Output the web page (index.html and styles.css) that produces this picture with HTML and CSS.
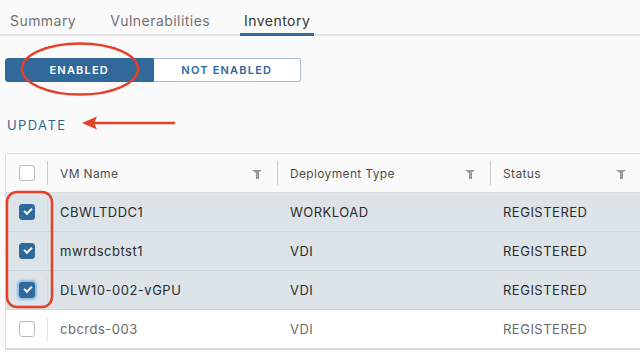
FILE: index.html
```html
<!DOCTYPE html>
<html lang="en">
<head>
    <meta charset="UTF-8">
    <meta name="viewport" content="width=device-width, initial-scale=1.0">
    <title>Inventory</title>
    <link rel="stylesheet" href="styles.css">
</head>
<body>

    <div class="page">
        <nav class="tabs">
            <span class="tab">Summary</span>
            <span class="tab">Vulnerabilities</span>
            <span class="tab active">Inventory</span>
        </nav>

        <div class="toggle">
            <button class="toggle-btn on">ENABLED</button>
            <button class="toggle-btn">NOT ENABLED</button>
        </div>

        <div class="update">UPDATE</div>

        <div class="grid">
            <div class="row head">
                <div class="cell check"><span class="box"></span></div>
                <div class="cell sep">VM Name <span class="filter"></span></div>
                <div class="cell sep">Deployment Type <span class="filter"></span></div>
                <div class="cell sep">Status <span class="filter"></span></div>
            </div>
            <div class="row selected">
                <div class="cell check"><span class="box checked"></span></div>
                <div class="cell sep-light">CBWLTDDC1</div>
                <div class="cell">WORKLOAD</div>
                <div class="cell">REGISTERED</div>
            </div>
            <div class="row selected">
                <div class="cell check"><span class="box checked"></span></div>
                <div class="cell sep-light">mwrdscbtst1</div>
                <div class="cell">VDI</div>
                <div class="cell">REGISTERED</div>
            </div>
            <div class="row selected">
                <div class="cell check"><span class="box checked focus"></span></div>
                <div class="cell sep-light">DLW10-002-vGPU</div>
                <div class="cell">VDI</div>
                <div class="cell">REGISTERED</div>
            </div>
            <div class="row plain">
                <div class="cell check"><span class="box"></span></div>
                <div class="cell sep-light">cbcrds-003</div>
                <div class="cell">VDI</div>
                <div class="cell">REGISTERED</div>
            </div>
        </div>
    </div>

    <!-- red annotations drawn over the screenshot -->
    <svg class="marks" width="640" height="352" viewBox="0 0 640 352">
        <ellipse cx="80" cy="69" rx="58" ry="25.5" fill="none" stroke="#e4412b" stroke-width="2.5"/>
        <line x1="92" y1="123" x2="175" y2="123" stroke="#e4412b" stroke-width="2.5"/>
        <polygon points="82,123 97,116.5 94,123 97,129.5" fill="#e4412b"/>
        <rect x="7" y="192" width="45" height="115" rx="10" fill="none" stroke="#e4412b" stroke-width="2.5"/>
    </svg>

</body>
</html>
```

FILE: styles.css
```css
body {
    margin: 0;
    background-color: #fafafa;
    font-family: Inter, "Noto Sans", sans-serif;
    overflow: hidden;
    width: 640px;
    height: 352px;
    position: relative;
}
.tabs {
    display: flex;
    padding-left: 6px;
    border-bottom: 2px solid #e1e1e1;
}
.tab {
    padding: 8px 4px 0;
    margin-right: 26px;
    line-height: 25px;
    font-size: 14px;
    letter-spacing: 0.45px;
    color: #727272;
    border-bottom: 3px solid transparent;
    margin-bottom: -2px;
}
.tab.active {
    color: #333;
    border-bottom-color: #31699a;
}
.toggle {
    display: flex;
    margin: 22px 0 0 5px;
    width: 296px;
}
.toggle-btn {
    flex: 1;
    height: 24px;
    padding: 0;
    font-family: inherit;
    font-size: 11px;
    font-weight: 600;
    letter-spacing: 1.2px;
    color: #31699a;
    background: #fff;
    border: 1px solid #a6bfd4;
    border-left: none;
    border-radius: 0 3px 3px 0;
}
.toggle-btn.on {
    color: #fff;
    background-color: #31699a;
    border: 1px solid #31699a;
    border-radius: 3px 0 0 3px;
}
.update {
    margin: 35px 0 0 7px;
    font-size: 13px;
    letter-spacing: 1.4px;
    color: #31699a;
    line-height: 16px;
}
.grid {
    margin: 20px 0 0 5px;
    width: 635px;
    border: 1px solid #dcdcdc;
    border-right: none;
    border-radius: 3px 0 0 0;
    background: #fff;
}
.row {
    display: grid;
    grid-template-columns: 41px 230px 213px 1fr;
    height: 38px;
    border-bottom: 1px solid #d6d6d6;
    font-size: 13px;
    letter-spacing: 0.5px;
    color: #2b2b2b;
}
.row.head {
    background: #fafafa;
    font-size: 12px;
    letter-spacing: 0.35px;
    color: #4d4d4d;
    border-bottom-color: #dcdcdc;
}
.row.selected {
    background: #dce4ea;
    border-bottom-color: #cdd6de;
}
.row.plain {
    color: #6a6a6a;
}
.cell {
    display: flex;
    align-items: center;
    padding-left: 13px;
    position: relative;
}
.cell.check {
    padding-left: 13px;
}
.sep::before, .sep-light::before {
    content: "";
    position: absolute;
    left: 0;
    top: 7px;
    bottom: 7px;
    width: 1px;
    background: #cccccc;
}
.sep-light::before {
    background: #d2d9df;
}
.plain .sep-light::before {
    background: #e4e4e4;
}
.filter {
    position: absolute;
    right: 15px;
    top: 16px;
    width: 0;
    height: 0;
    border-left: 5px solid transparent;
    border-right: 5px solid transparent;
    border-top: 4px solid #9a9a9a;
}
.filter::after {
    content: "";
    position: absolute;
    left: -1.5px;
    top: -1px;
    width: 3px;
    height: 6px;
    background: #9a9a9a;
}
.box {
    width: 14px;
    height: 14px;
    border: 1px solid #b9b9b9;
    border-radius: 3px;
    background: #fff;
    position: relative;
}
.box.checked {
    background: #2f6a9b;
    border-color: #2f6a9b;
}
.box.checked::after {
    content: "";
    position: absolute;
    left: 4px;
    top: 3px;
    width: 6px;
    height: 3px;
    border-left: 2px solid #fff;
    border-bottom: 2px solid #fff;
    transform: rotate(-45deg);
}
.box.focus {
    box-shadow: 0 0 2px 2px rgba(90, 160, 225, 0.6);
}
.marks {
    position: absolute;
    left: 0;
    top: 0;
    pointer-events: none;
}
```
